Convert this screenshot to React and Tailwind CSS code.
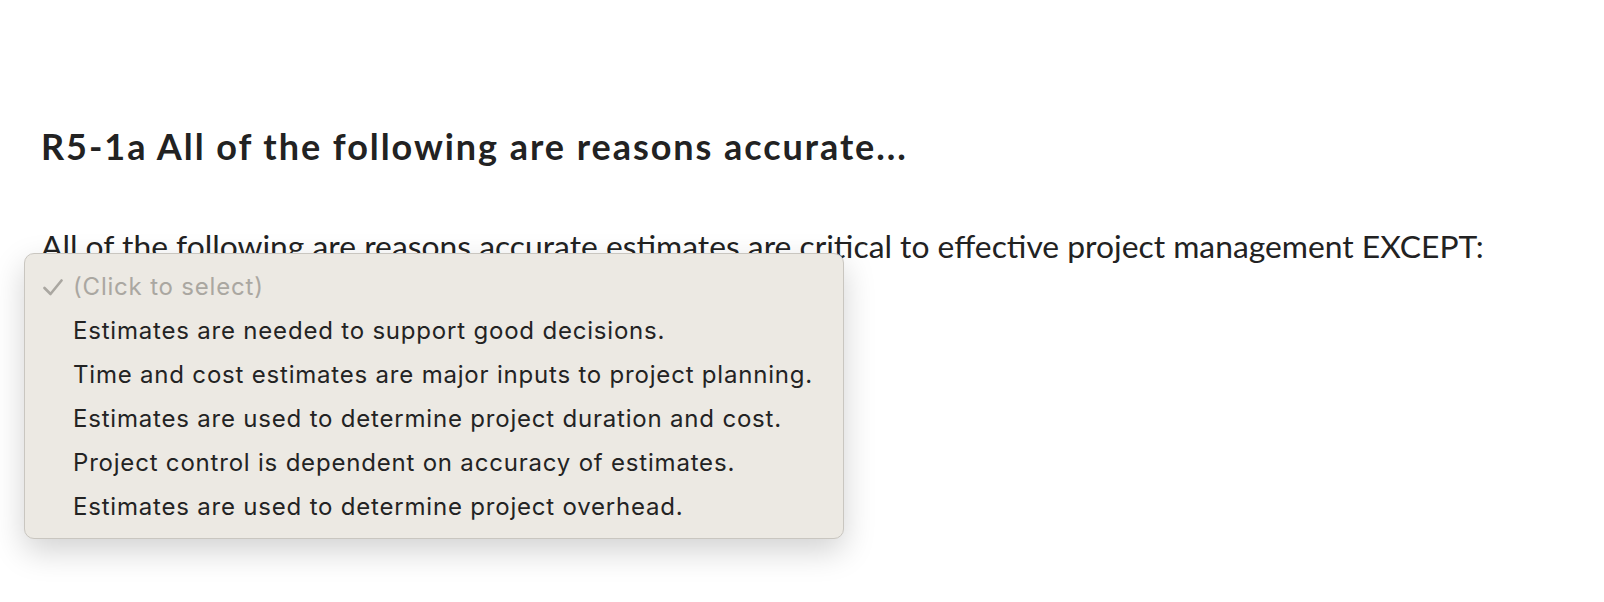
import React from "react";

const options = [
  "Estimates are needed to support good decisions.",
  "Time and cost estimates are major inputs to project planning.",
  "Estimates are used to determine project duration and cost.",
  "Project control is dependent on accuracy of estimates.",
  "Estimates are used to determine project overhead.",
];

export default function App() {
  return (
    <div className="w-[1604px] h-[602px] bg-white overflow-hidden relative">
      <div className="pl-[41px] pt-[124px]">
        <h1
          className="text-[36px] leading-[44px] font-bold text-[#222222] tracking-[1.95px]"
          style={{ fontFamily: "Lato, 'Liberation Sans', sans-serif" }}
        >
          R5-1a All of the following are reasons accurate...
        </h1>
        <div className="relative mt-[58px]">
          <p
            className="text-[31.8px] leading-[40px] text-[#222222]"
            style={{ fontFamily: "Lato, 'Liberation Sans', sans-serif" }}
          >
            All of the following are reasons accurate estimates are critical to effective project management EXCEPT:
          </p>
          <div
            className="absolute left-[-17px] top-[27px] w-[820px] h-[286px] rounded-[10px] border border-[#c9c6c0] bg-[#ece9e3] shadow-[0_12px_32px_rgba(0,0,0,0.18)] pt-[11px]"
            style={{ fontFamily: "Inter, 'Noto Sans', sans-serif" }}
          >
            <div className="flex items-center h-[44px] text-[24px] tracking-[0.8px] text-[#aaa7a1]">
              <span className="w-[48px] pl-[18px] flex items-center">
                <svg width="20" height="17" viewBox="0 0 20 17" fill="none">
                  <path
                    d="M1.5 9 L7.5 15 L18.5 1.5"
                    stroke="#aaa7a1"
                    strokeWidth="2.6"
                    strokeLinecap="round"
                    strokeLinejoin="round"
                  />
                </svg>
              </span>
              <span>(Click to select)</span>
            </div>
            {options.map((o) => (
              <div key={o} className="flex items-center h-[44px] text-[24px] tracking-[0.8px] text-[#232323]">
                <span className="w-[48px]" />
                <span>{o}</span>
              </div>
            ))}
          </div>
        </div>
      </div>
    </div>
  );
}
